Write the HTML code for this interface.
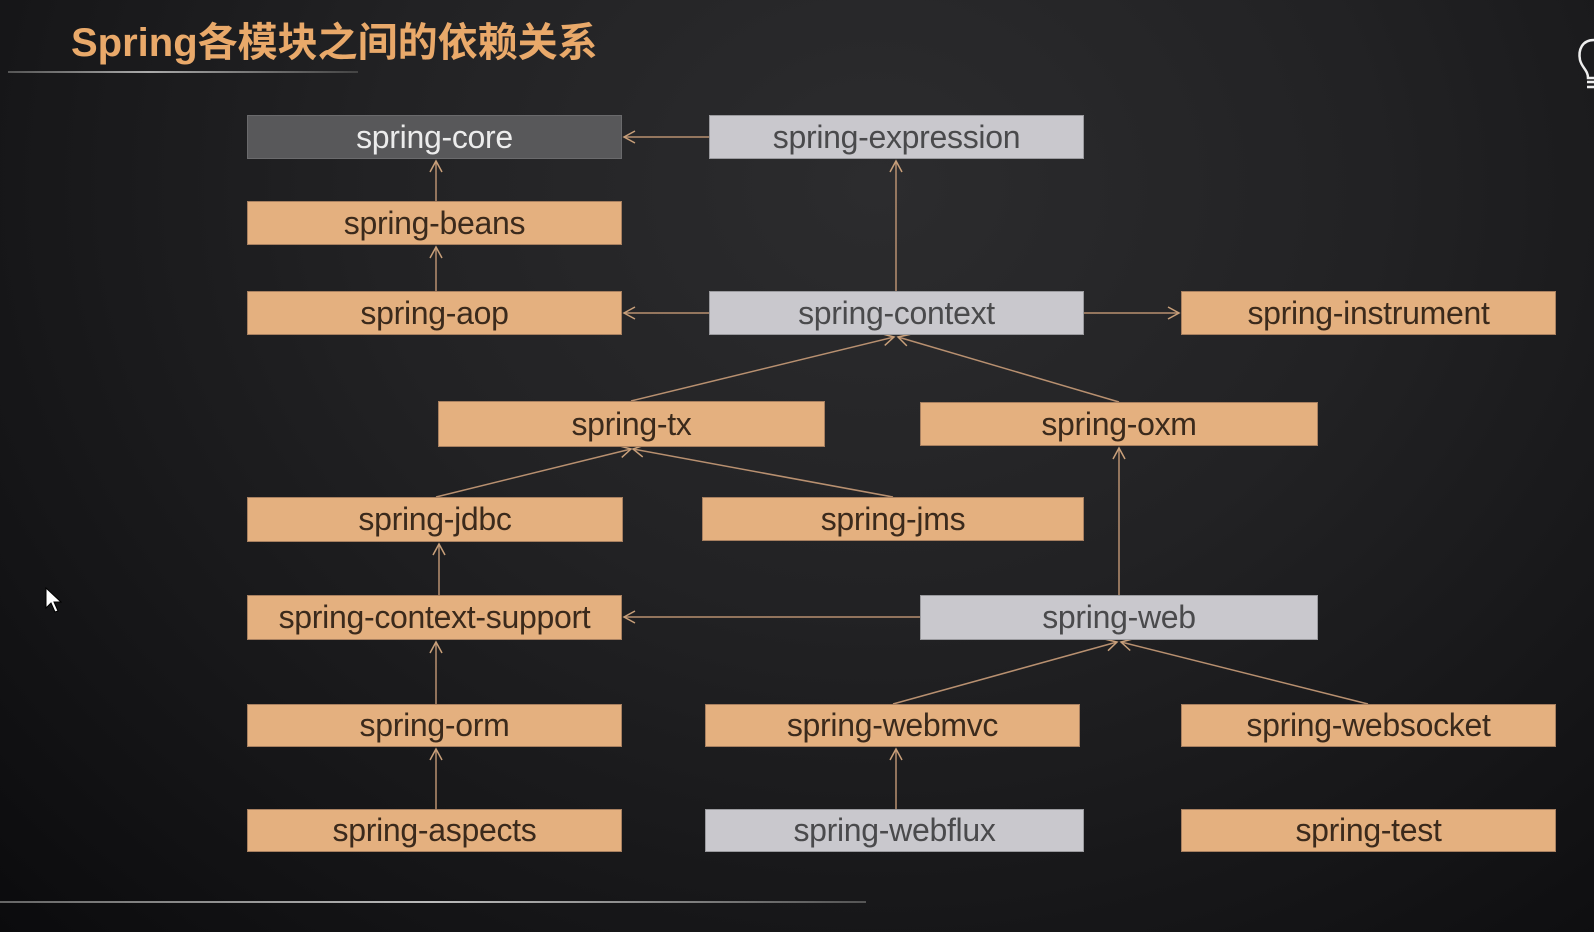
<!DOCTYPE html>
<html><head><meta charset="utf-8"><style>
html,body{margin:0;padding:0}
body{width:1594px;height:932px;overflow:hidden;position:relative;
background:radial-gradient(ellipse at 55% 20%,#2c2c2e 0%,#222224 40%,#151517 75%,#0b0b0d 100%);
font-family:"Liberation Sans","Noto Sans CJK SC",sans-serif}
.t{position:absolute;left:71px;top:10px;font-size:40px;font-weight:bold;color:#e9a96a;letter-spacing:0px}
.b{position:absolute;display:flex;align-items:center;justify-content:center;font-size:32px;color:#3b2a1c;background:#e4b07f;box-sizing:border-box;border:1px solid #a88060;letter-spacing:-0.3px}
.g{background:#c9c8cd;color:#4a4a4c;border-color:#9a9a9e}
.d{background:#58585a;color:#ececec;border-color:#6a6a6c}
</style></head><body>
<div class="t">Spring各模块之间的依赖关系</div>
<div style="position:absolute;left:8px;top:71px;width:350px;height:2px;background:linear-gradient(90deg,#555,#aaa 40%,#444)"></div>
<div style="position:absolute;left:0;top:901px;width:866px;height:2px;background:linear-gradient(90deg,#666,#bbb 50%,#555)"></div>
<svg style="position:absolute;left:0;top:0" width="1594" height="932">
<defs><marker id="a" markerWidth="14" markerHeight="14" refX="12" refY="7" orient="auto" markerUnits="userSpaceOnUse"><path d="M1,1 L12,7 L1,13" fill="none" stroke="#c9a07a" stroke-width="1.5"/></marker></defs>
<g stroke="#b89070" stroke-width="1.5" fill="none" marker-end="url(#a)">
<line x1="709" y1="137" x2="624" y2="137"/>
<line x1="436" y1="201" x2="436" y2="161"/>
<line x1="436" y1="291" x2="436" y2="247"/>
<line x1="896" y1="291" x2="896" y2="161"/>
<line x1="709" y1="313" x2="624" y2="313"/>
<line x1="1084" y1="313" x2="1179" y2="313"/>
<line x1="631" y1="401" x2="894" y2="337"/>
<line x1="1119" y1="402" x2="898" y2="337"/>
<line x1="436" y1="497" x2="631" y2="449"/>
<line x1="893" y1="497" x2="633" y2="449"/>
<line x1="439" y1="595" x2="439" y2="544"/>
<line x1="1119" y1="595" x2="1119" y2="448"/>
<line x1="920" y1="617" x2="624" y2="617"/>
<line x1="436" y1="704" x2="436" y2="642"/>
<line x1="893" y1="704" x2="1117" y2="642"/>
<line x1="1368" y1="704" x2="1121" y2="642"/>
<line x1="436" y1="809" x2="436" y2="749"/>
<line x1="896" y1="809" x2="896" y2="749"/>
</g>
<path d="M46,588 L46,608 L51,603 L55,612 L58,611 L54,602 L61,602 Z" fill="#fff" stroke="#000" stroke-width="1"/>
<path d="M1594,40 C1582,40 1578,50 1580,60 C1582,68 1588,70 1588,78 L1594,78" fill="none" stroke="#eee" stroke-width="2.5"/>
<path d="M1587,82 L1594,82 M1587,87 L1594,87" stroke="#eee" stroke-width="2.5"/>
</svg>
<div class="b d" style="left:247px;top:115px;width:375px;height:44px;">spring-core</div>
<div class="b g" style="left:709px;top:115px;width:375px;height:44px;">spring-expression</div>
<div class="b" style="left:247px;top:201px;width:375px;height:44px;">spring-beans</div>
<div class="b" style="left:247px;top:291px;width:375px;height:44px;">spring-aop</div>
<div class="b g" style="left:709px;top:291px;width:375px;height:44px;">spring-context</div>
<div class="b" style="left:1181px;top:291px;width:375px;height:44px;">spring-instrument</div>
<div class="b" style="left:438px;top:401px;width:387px;height:46px;">spring-tx</div>
<div class="b" style="left:920px;top:402px;width:398px;height:44px;">spring-oxm</div>
<div class="b" style="left:247px;top:497px;width:376px;height:45px;">spring-jdbc</div>
<div class="b" style="left:702px;top:497px;width:382px;height:44px;">spring-jms</div>
<div class="b" style="left:247px;top:595px;width:375px;height:45px;">spring-context-support</div>
<div class="b g" style="left:920px;top:595px;width:398px;height:45px;">spring-web</div>
<div class="b" style="left:247px;top:704px;width:375px;height:43px;">spring-orm</div>
<div class="b" style="left:705px;top:704px;width:375px;height:43px;">spring-webmvc</div>
<div class="b" style="left:1181px;top:704px;width:375px;height:43px;">spring-websocket</div>
<div class="b" style="left:247px;top:809px;width:375px;height:43px;">spring-aspects</div>
<div class="b g" style="left:705px;top:809px;width:379px;height:43px;">spring-webflux</div>
<div class="b" style="left:1181px;top:809px;width:375px;height:43px;">spring-test</div>
</body></html>
